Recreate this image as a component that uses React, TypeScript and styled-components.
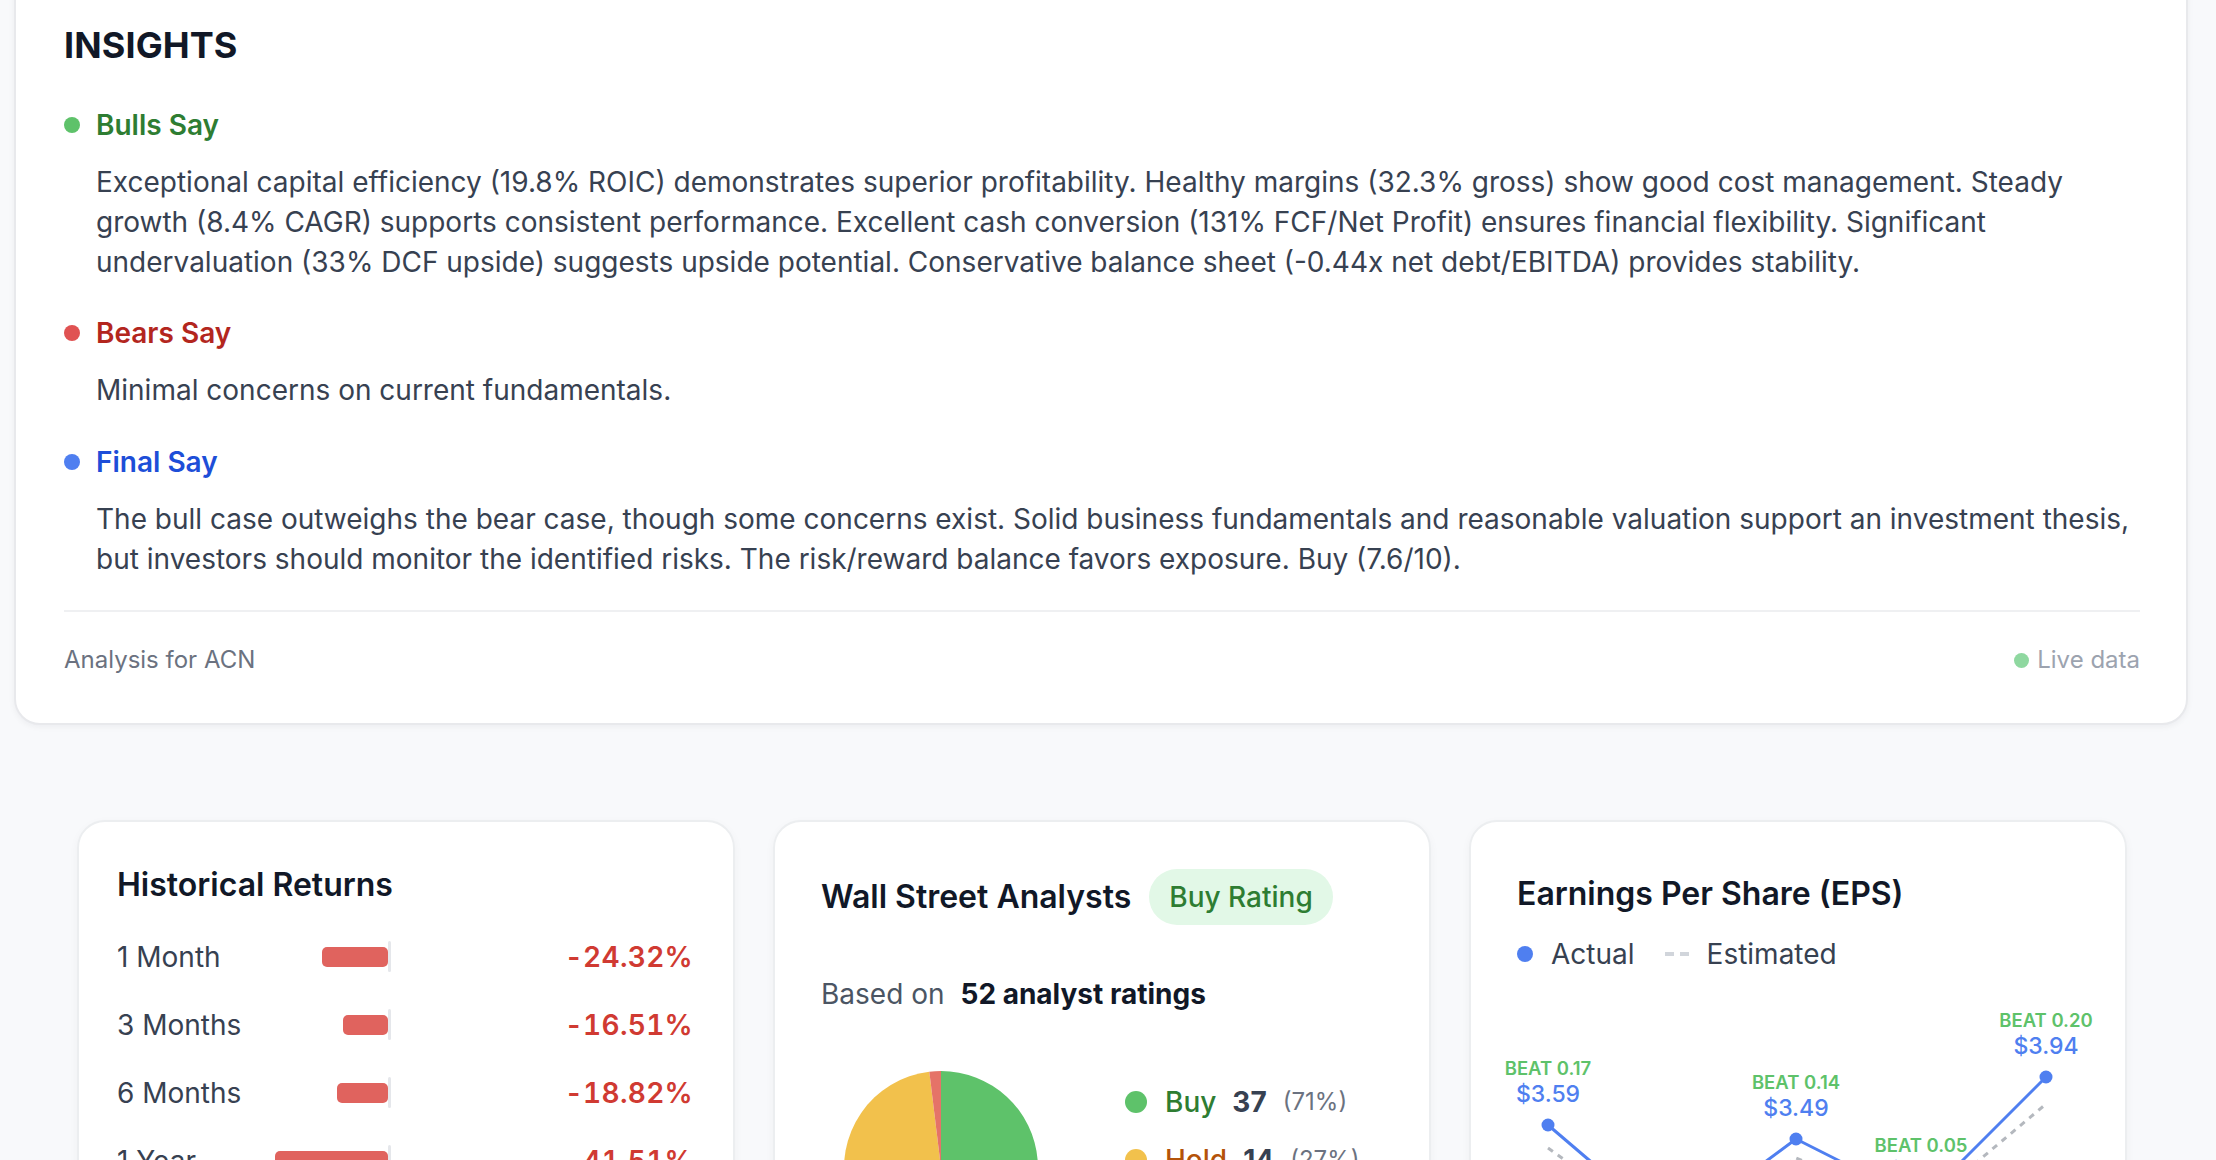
import React from "react";
import styled, { createGlobalStyle } from "styled-components";

const Global = createGlobalStyle`
  html, body {
    margin: 0;
    padding: 0;
    overflow: hidden;
    background: #f8f9fb;
  }
  body {
    font-family: Inter, "Noto Sans", "Liberation Sans", sans-serif;
    color: #374151;
    -webkit-font-smoothing: antialiased;
  }
  * { box-sizing: border-box; }
`;

const Page = styled.div`
  width: 2216px;
  padding: 0 28px 0 14px;
  margin-top: -29.5px;
`;

const InsightsCard = styled.section`
  background: #ffffff;
  border: 2px solid #e8e9ec;
  border-radius: 26px;
  box-shadow: 0 2px 6px rgba(17, 24, 39, 0.05);
  padding: 48px 46px 44.5px 48px;
`;

const InsightsTitle = styled.h2`
  margin: 0 0 36px 0;
  font-size: 36px;
  line-height: 48px;
  font-weight: 700;
  color: #111827;
  letter-spacing: 0.1px;
`;

const Section = styled.div`
  & + & {
    margin-top: 31.5px;
  }
`;

const SectionHead = styled.div<{ $color: string; $dot: string }>`
  display: flex;
  align-items: center;
  gap: 16px;
  font-size: 28px;
  line-height: 40px;
  font-weight: 600;
  color: ${(p) => p.$color};
  &::before {
    content: "";
    width: 16px;
    height: 16px;
    border-radius: 50%;
    background: ${(p) => p.$dot};
    flex: none;
  }
`;

const SectionBody = styled.p`
  margin: 17px 0 0 32px;
  font-size: 28px;
  line-height: 40px;
  color: #374151;
  font-weight: 400;
`;

const Divider = styled.hr`
  border: none;
  height: 2px;
  background: #eff0f2;
  margin: 31.5px 0 0 0;
`;

const Footer = styled.div`
  display: flex;
  align-items: center;
  justify-content: space-between;
  padding-top: 30px;
  font-size: 24px;
  line-height: 36px;
`;

const FooterLeft = styled.span`
  color: #6b7280;
`;

const LiveData = styled.span`
  display: flex;
  align-items: center;
  gap: 8px;
  color: #9ca3af;
  &::before {
    content: "";
    width: 15px;
    height: 15px;
    border-radius: 50%;
    background: #8fd8a0;
  }
`;

const CardGrid = styled.div`
  display: grid;
  grid-template-columns: repeat(3, 658px);
  gap: 38px;
  margin: 95px 0 0 63px;
`;

const Card = styled.div<{ $pl: number }>`
  background: #ffffff;
  border: 2px solid #eceef0;
  border-radius: 28px;
  box-shadow: 0 3px 10px rgba(17, 24, 39, 0.04);
  padding: 0 40px 40px ${(p) => p.$pl}px;
  min-height: 560px;
`;

const CardTitle = styled.h3`
  margin: 0;
  font-size: 32px;
  line-height: 44px;
  font-weight: 600;
  color: #111827;
`;

/* Historical returns */
const ReturnsHead = styled.div`
  padding-top: 41px;
  margin-bottom: 16px;
`;

const ReturnRow = styled.div`
  display: grid;
  grid-template-columns: 152px 240px 1fr;
  align-items: center;
  height: 68px;
`;

const ReturnLabel = styled.span`
  font-size: 28px;
  color: #374151;
`;

const Track = styled.div`
  display: flex;
  align-items: center;
  height: 31px;
`;

const Half = styled.div<{ $side: "neg" | "pos" }>`
  flex: 1;
  display: flex;
  justify-content: ${(p) => (p.$side === "neg" ? "flex-end" : "flex-start")};
`;

const Axis = styled.div`
  width: 3px;
  height: 31px;
  background: #e5e7eb;
  border-radius: 2px;
`;

const Bar = styled.div<{ $neg: boolean }>`
  height: 20px;
  border-radius: 5px;
  background: ${(p) => (p.$neg ? "#e0635e" : "#5ec26a")};
`;

const ReturnValue = styled.span<{ $neg: boolean }>`
  justify-self: end;
  font-size: 28px;
  font-weight: 600;
  font-variant-numeric: tabular-nums;
  letter-spacing: 0.3px;
  color: ${(p) => (p.$neg ? "#d03a32" : "#2e7d32")};
`;

/* Analysts */
const AnalystHead = styled.div`
  display: flex;
  align-items: center;
  gap: 18px;
  padding-top: 47px;
`;

const Pill = styled.span`
  display: inline-flex;
  align-items: center;
  height: 56px;
  padding: 0 20px;
  border-radius: 28px;
  background: #e2f8e7;
  color: #2e7d32;
  font-size: 28px;
  font-weight: 500;
`;

const BasedOn = styled.div`
  margin-top: 49px;
  display: flex;
  gap: 16px;
  font-size: 28px;
  line-height: 40px;
  color: #4b5563;
  & b {
    color: #111827;
    font-weight: 700;
  }
`;

const PieRow = styled.div`
  display: flex;
  margin-top: 57px;
`;

const PieBox = styled.div`
  margin-left: 23px;
  width: 194px;
  height: 194px;
  flex: none;
`;

const Legend = styled.div`
  margin-left: 87px;
  padding-top: 11px;
  display: flex;
  flex-direction: column;
  gap: 18px;
`;

const LegendItem = styled.div`
  display: flex;
  align-items: center;
  height: 40px;
  gap: 16px;
`;

const LegendDot = styled.span<{ $c: string }>`
  width: 22px;
  height: 22px;
  border-radius: 50%;
  background: ${(p) => p.$c};
  margin-right: 2px;
`;

const LegendName = styled.span<{ $c: string }>`
  font-size: 28px;
  font-weight: 500;
  color: ${(p) => p.$c};
`;

const LegendCount = styled.span`
  font-size: 28px;
  font-weight: 700;
  color: #374151;
`;

const LegendPct = styled.span`
  font-size: 24px;
  color: #6b7280;
`;

/* EPS */
const EpsHead = styled.div`
  padding-top: 50px;
`;

const EpsLegend = styled.div`
  display: flex;
  align-items: center;
  margin-top: 18px;
  height: 40px;
  font-size: 28px;
  color: #374151;
`;

const EpsDot = styled.span`
  width: 16px;
  height: 16px;
  border-radius: 50%;
  background: #4f7ff0;
  margin-right: 18px;
`;

const DashSample = styled.span`
  width: 24px;
  height: 4px;
  margin: 0 18px 0 30px;
  background: linear-gradient(to right, #d1d5db 0 9px, transparent 9px 15px, #d1d5db 15px 24px);
`;

const ChartBox = styled.div`
  margin: 0 -40px 0 -46px;
  & svg {
    display: block;
  }
`;

const returns = [
  { label: "1 Month", v: -24.32 },
  { label: "3 Months", v: -16.51 },
  { label: "6 Months", v: -18.82 },
  { label: "1 Year", v: -41.51 },
  { label: "3 Years", v: -20.4 },
];

const ratings = [
  { name: "Buy", count: 37, pct: 71, dot: "#5ec26a", color: "#2e7d32" },
  { name: "Hold", count: 14, pct: 27, dot: "#f2c14c", color: "#b45309" },
  { name: "Sell", count: 1, pct: 2, dot: "#e57368", color: "#c62828" },
];

function Pie() {
  const total = ratings.reduce((s, r) => s + r.count, 0);
  const r = 97;
  const cx = 97;
  const cy = 97;
  let a0 = 0;
  const pt = (a: number) => {
    const rad = (a - 90) * (Math.PI / 180);
    return [cx + r * Math.cos(rad), cy + r * Math.sin(rad)];
  };
  return (
    <svg width="194" height="194" viewBox="0 0 194 194">
      {ratings.map((s) => {
        const a1 = a0 + (s.count / total) * 360;
        const [x0, y0] = pt(a0);
        const [x1, y1] = pt(a1);
        const large = a1 - a0 > 180 ? 1 : 0;
        const d = `M${cx},${cy} L${x0},${y0} A${r},${r} 0 ${large} 1 ${x1},${y1} Z`;
        a0 = a1;
        return <path key={s.name} d={d} fill={s.dot} />;
      })}
    </svg>
  );
}

const eps = [
  { x: 77, a: 151, e: 174, beat: "BEAT 0.17", val: "$3.59" },
  { x: 201, a: 257, e: 263, beat: "BEAT 0.04", val: "$2.84" },
  { x: 325, a: 165, e: 184, beat: "BEAT 0.14", val: "$3.49" },
  { x: 450, a: 228, e: 235, beat: "BEAT 0.05", val: "$3.04" },
  { x: 575, a: 103, e: 130, beat: "BEAT 0.20", val: "$3.94" },
];

function EpsChart() {
  const actual = eps.map((p) => `${p.x},${p.a}`).join(" ");
  const est = eps.map((p) => `${p.x},${p.e}`).join(" ");
  return (
    <svg width="650" height="360" viewBox="0 0 650 360">
      <polyline points={est} fill="none" stroke="#b4b8be" strokeWidth="3" strokeDasharray="6 6" />
      <polyline points={actual} fill="none" stroke="#4f7ff0" strokeWidth="3" strokeLinejoin="round" />
      {eps.map((p) => (
        <g key={p.x}>
          <circle cx={p.x} cy={p.a} r="6.5" fill="#4f7ff0" />
          <text
            x={p.x}
            y={p.a - 57}
            textAnchor="middle"
            dominantBaseline="central"
            fontFamily="Inter, sans-serif"
            fontSize="18.5"
            fontWeight="600"
            fill="#5ec26a"
          >
            {p.beat}
          </text>
          <text
            x={p.x}
            y={p.a - 31}
            textAnchor="middle"
            dominantBaseline="central"
            fontFamily="Inter, sans-serif"
            fontSize="23"
            fontWeight="500"
            fill="#4f7ff0"
          >
            {p.val}
          </text>
        </g>
      ))}
    </svg>
  );
}

export default function App() {
  return (
    <>
      <Global />
      <Page>
        <InsightsCard>
          <InsightsTitle>INSIGHTS</InsightsTitle>
          <Section>
            <SectionHead $color="#2e7d32" $dot="#5ec26a">Bulls Say</SectionHead>
            <SectionBody>
              Exceptional capital efficiency (19.8% ROIC) demonstrates superior profitability. Healthy margins
              (32.3% gross) show good cost management. Steady growth (8.4% CAGR) supports consistent performance.
              Excellent cash conversion (131% FCF/Net Profit) ensures financial flexibility. Significant
              undervaluation (33% DCF upside) suggests upside potential. Conservative balance sheet (-0.44x net
              debt/EBITDA) provides stability.
            </SectionBody>
          </Section>
          <Section>
            <SectionHead $color="#b3261e" $dot="#e05252">Bears Say</SectionHead>
            <SectionBody>Minimal concerns on current fundamentals.</SectionBody>
          </Section>
          <Section>
            <SectionHead $color="#1d4ed8" $dot="#4f7ff0">Final Say</SectionHead>
            <SectionBody>
              The bull case outweighs the bear case, though some concerns exist. Solid business fundamentals and
              reasonable valuation support an investment thesis, but investors should monitor the identified
              risks. The risk/reward balance favors exposure. Buy (7.6/10).
            </SectionBody>
          </Section>
          <Divider />
          <Footer>
            <FooterLeft>Analysis for ACN</FooterLeft>
            <LiveData>Live data</LiveData>
          </Footer>
        </InsightsCard>

        <CardGrid>
          <Card $pl={38}>
            <ReturnsHead>
              <CardTitle>Historical Returns</CardTitle>
            </ReturnsHead>
            {returns.map((r) => {
              const neg = r.v < 0;
              const w = Math.abs(r.v) * 2.7;
              return (
                <ReturnRow key={r.label}>
                  <ReturnLabel>{r.label}</ReturnLabel>
                  <Track>
                    <Half $side="neg">{neg && <Bar $neg style={{ width: w }} />}</Half>
                    <Axis />
                    <Half $side="pos">{!neg && <Bar $neg={false} style={{ width: w }} />}</Half>
                  </Track>
                  <ReturnValue $neg={neg}>
                    {neg ? "-" : "+"}
                    {Math.abs(r.v).toFixed(2)}%
                  </ReturnValue>
                </ReturnRow>
              );
            })}
          </Card>

          <Card $pl={46}>
            <AnalystHead>
              <CardTitle>Wall Street Analysts</CardTitle>
              <Pill>Buy Rating</Pill>
            </AnalystHead>
            <BasedOn>
              <span>Based on</span>
              <b>52 analyst ratings</b>
            </BasedOn>
            <PieRow>
              <PieBox>
                <Pie />
              </PieBox>
              <Legend>
                {ratings.map((r) => (
                  <LegendItem key={r.name}>
                    <LegendDot $c={r.dot} />
                    <LegendName $c={r.color}>{r.name}</LegendName>
                    <LegendCount>{r.count}</LegendCount>
                    <LegendPct>({r.pct}%)</LegendPct>
                  </LegendItem>
                ))}
              </Legend>
            </PieRow>
          </Card>

          <Card $pl={46}>
            <EpsHead>
              <CardTitle>Earnings Per Share (EPS)</CardTitle>
            </EpsHead>
            <EpsLegend>
              <EpsDot />
              Actual
              <DashSample />
              Estimated
            </EpsLegend>
            <ChartBox>
              <EpsChart />
            </ChartBox>
          </Card>
        </CardGrid>
      </Page>
    </>
  );
}
